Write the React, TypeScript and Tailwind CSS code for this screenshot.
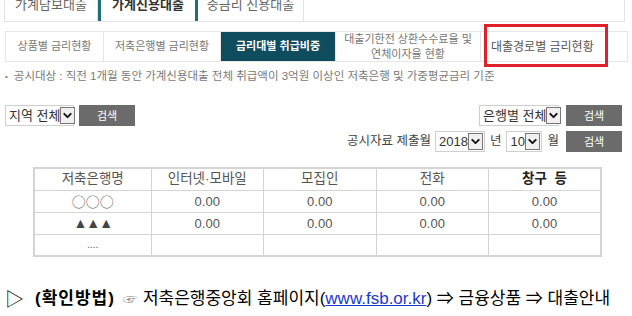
import { ChevronDown } from 'lucide-react';

const font = { fontFamily: '"Liberation Sans", "Noto Sans CJK KR", sans-serif' };

function FakeSelect({ label, width }: { label: string; width: string }) {
	return (
		<div className={`flex h-[21px] items-center border border-[#cfcfcf] bg-white pl-[3px] ${width}`}>
			<span className="flex-1 whitespace-nowrap text-[13px] leading-none text-[#333]">{label}</span>
			<span className="mr-[1px] flex h-[17px] w-[17px] items-center justify-center border border-[#777] bg-[#f0f0f0]">
				<ChevronDown size={13} strokeWidth={3.5} className="text-[#111]" />
			</span>
		</div>
	);
}

function SearchButton() {
	return (
		<button className="flex h-[21px] w-[56px] items-center justify-center bg-[#6b6b6b] text-[11px] text-white">
			검색
		</button>
	);
}

const subTabs = [
	{ label: '상품별 금리현황', w: 'w-[98px]' },
	{ label: '저축은행별 금리현황', w: 'w-[117px]' },
	{ label: '금리대별 취급비중', w: 'w-[115px]', active: true },
	{ label: '대출기한전 상환수수료율 및\n연체이자율 현황', w: 'w-[145px]' },
];

const rows = [
	['○○○', '0.00', '0.00', '0.00', '0.00'],
	['▲▲▲', '0.00', '0.00', '0.00', '0.00'],
	['....', '', '', '', ''],
];

export default function App() {
	return (
		<div className="h-[316px] w-[632px] overflow-hidden bg-white" style={font}>
			{/* top tabs */}
			<div className="-mt-[12px] ml-[4px] mr-[7px] flex h-[34px] border-b border-[#e3e3e3]">
				<div className="flex w-[94px] items-center justify-center border-l border-r border-[#e3e3e3] text-[13px] text-[#666]">
					가계담보대출
				</div>
				<div className="flex w-[100px] items-center justify-center border-l-[3px] border-r-[3px] border-[#1f6f78] text-[13px] font-bold text-[#333]">
					가계신용대출
				</div>
				<div className="flex w-[106px] items-center justify-center border-r border-[#e3e3e3] text-[13px] text-[#666]">
					중금리 신용대출
				</div>
				<div className="flex-1 border-r border-[#e3e3e3]" />
			</div>

			{/* sub tabs */}
			<div className="ml-[5px] mr-[4px] mt-[9px] flex h-[31px] border border-[#e6e6e6]">
				{subTabs.map((t) => (
					<div
						key={t.label}
						className={`flex items-center justify-center whitespace-pre-line border-r border-[#e6e6e6] text-center text-[11px] leading-[15px] ${t.w} ${
							t.active ? 'bg-[#0f4c5e] font-bold text-white' : 'text-[#777]'
						}`}
					>
						{t.label}
					</div>
				))}
				<div className="relative flex flex-1 items-center">
					<div className="absolute -top-[8px] left-[3px] h-[43px] w-[124px] border-[3px] border-[#e0202a]" />
					<span className="pl-[10px] text-[12px] text-[#555]">대출경로별 금리현황</span>
				</div>
			</div>

			{/* notice */}
			<div className="ml-[5px] mt-[6px] flex items-center gap-[6px] text-[11.5px] text-[#7a7a7a]">
				<span className="text-[8px]">•</span>
				<span>공시대상 : 직전 1개월 동안 가계신용대출 전체 취급액이 3억원 이상인 저축은행 및 가중평균금리 기준</span>
			</div>

			{/* filters */}
			<div className="ml-[5px] mr-[10px] mt-[20px] flex items-start justify-between">
				<div className="flex gap-[5px]">
					<FakeSelect label="지역 전체" width="w-[69px]" />
					<SearchButton />
				</div>
				<div className="flex flex-col items-end gap-[5px]">
					<div className="flex gap-[7px]">
						<FakeSelect label="은행별 전체" width="w-[80px]" />
						<SearchButton />
					</div>
					<div className="flex items-center text-[12.5px] text-[#444]">
						<span className="mr-[4px]">공시자료 제출월</span>
						<FakeSelect label="2018" width="w-[50px]" />
						<span className="mx-[5px]">년</span>
						<FakeSelect label="10" width="w-[36px]" />
						<span className="ml-[5px] mr-[7px]">월</span>
						<SearchButton />
					</div>
				</div>
			</div>

			{/* table */}
			<table className="ml-[33px] mt-[15px] w-[569px] table-fixed border-collapse border-2 border-[#d4d4d4] text-[13px] text-[#555]">
				<thead>
					<tr className="h-[22px]">
						<th className="w-[117px] border border-[#d4d4d4] text-[13.5px] font-normal">저축은행명</th>
						<th className="border border-[#d4d4d4] text-[13.5px] font-normal">인터넷·모바일</th>
						<th className="border border-[#d4d4d4] text-[13.5px] font-normal">모집인</th>
						<th className="border border-[#d4d4d4] text-[13.5px] font-normal">전화</th>
						<th className="border border-[#d4d4d4] text-[13.5px] font-semibold text-[#222]">창구&nbsp;&nbsp;등</th>
					</tr>
				</thead>
				<tbody>
					{rows.map((row, i) => (
						<tr key={i} className="h-[22px]">
							{row.map((cell, j) => (
								<td
									key={j}
									className={`border border-[#d4d4d4] text-center leading-none ${
										cell === '○○○'
											? 'text-[14px] text-[#666]'
											: cell === '▲▲▲'
												? 'text-[14px] tracking-[-1px] text-[#444]'
												: cell === '....'
													? 'text-[10px]'
													: ''
									}`}
								>
									{cell === '○○○' ? (
										<span style={{ fontFamily: '"Noto Sans CJK KR", sans-serif' }}>{cell}</span>
									) : (
										cell
									)}
								</td>
							))}
						</tr>
					))}
				</tbody>
			</table>

			{/* bottom line */}
			<div className="ml-[5px] mt-[29px] flex items-center whitespace-nowrap text-[17px] text-black">
				<span className="mr-[11px] text-[19px] leading-none">▷</span>
				<span className="mr-[8px] font-bold tracking-[1px]">(확인방법)</span>
				<span className="mr-[6px] text-[14px] text-[#888]">☞</span>
				<span>
					저축은행중앙회 홈페이지(<span className="text-[#1a3acc] underline">www.fsb.or.kr</span>) ⇒ 금융상품 ⇒ 대출안내
				</span>
			</div>
		</div>
	);
}
